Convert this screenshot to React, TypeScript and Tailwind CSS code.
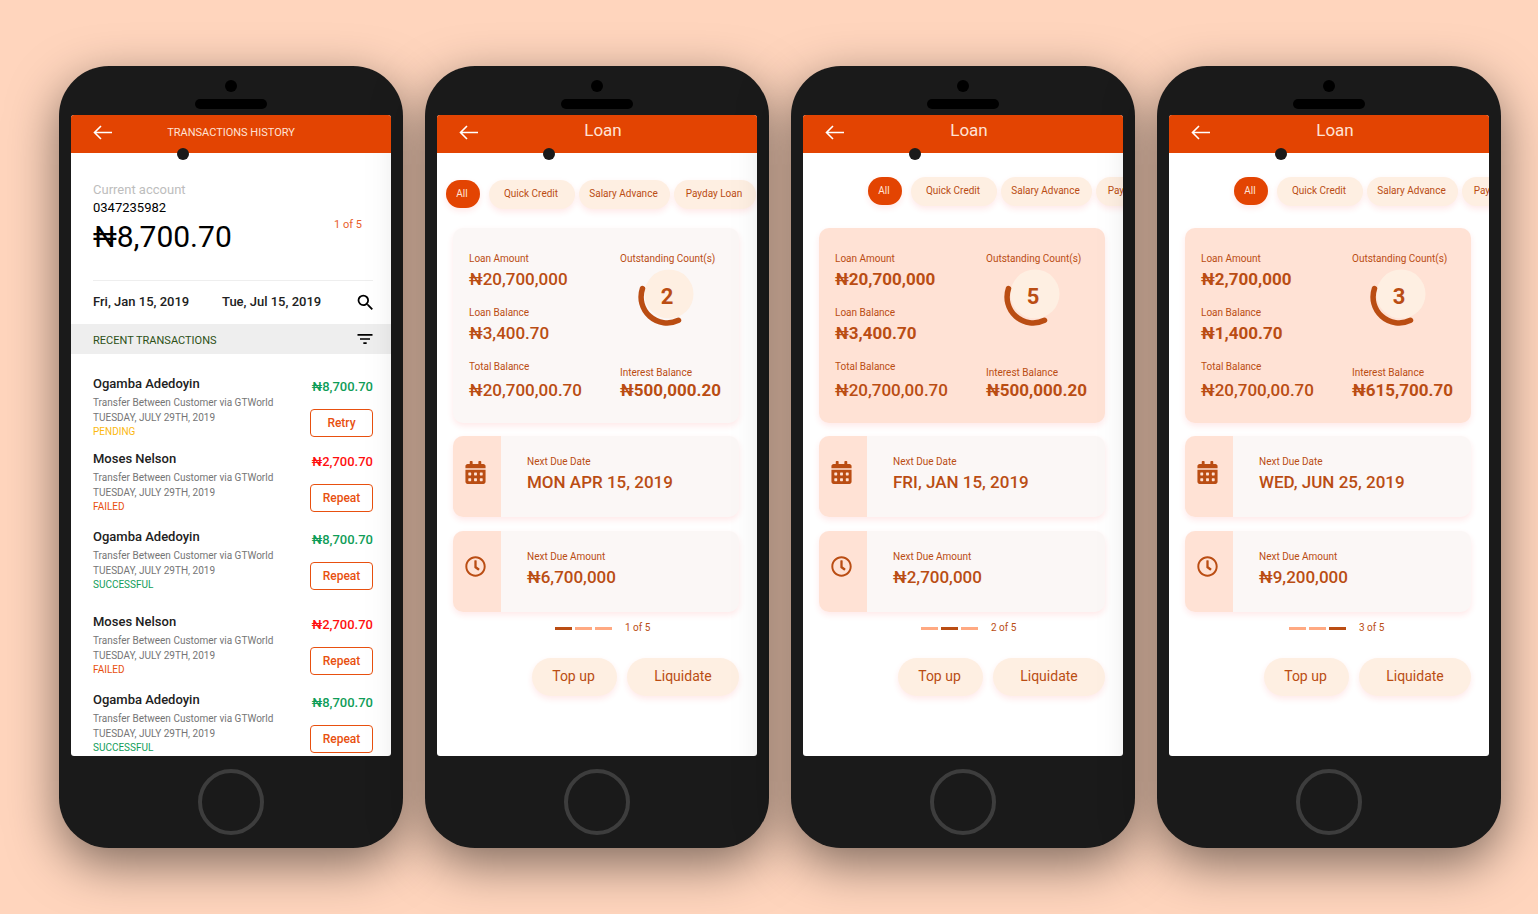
import type { ReactNode } from "react"
import { FaCalendarAlt, FaRegClock } from "react-icons/fa"
import { MdFilterList, MdSearch } from "react-icons/md"

const transactions = [
    { name: "Ogamba Adedoyin", amount: "₦8,700.70", status: "PENDING", action: "Retry", statusColor: "text-[#fbb80f]", amountColor: "text-[#0f9d58]", space: "mb-[3px]" },
    { name: "Moses Nelson", amount: "₦2,700.70", status: "FAILED", action: "Repeat", statusColor: "text-[#e8500f]", amountColor: "text-[#ff0f0f]", space: "mb-[6px]" },
    { name: "Ogamba Adedoyin", amount: "₦8,700.70", status: "SUCCESSFUL", action: "Repeat", statusColor: "text-[#0f9d58]", amountColor: "text-[#0f9d58]", space: "mb-[13px]" },
    { name: "Moses Nelson", amount: "₦2,700.70", status: "FAILED", action: "Repeat", statusColor: "text-[#e8500f]", amountColor: "text-[#ff0f0f]", space: "mb-[6px]" },
    { name: "Ogamba Adedoyin", amount: "₦8,700.70", status: "SUCCESSFUL", action: "Repeat", statusColor: "text-[#0f9d58]", amountColor: "text-[#0f9d58]", space: "" },
]

const loans = [
    {
        amount: "₦20,700,000", balance: "₦3,400.70", total: "₦20,700,00.70", interest: "₦500,000.20",
        count: 2, dueDate: "MON APR 15, 2019", dueAmount: "₦6,700,000", page: 1,
        tabs: "mt-[27px] pl-[9px]", card: "mt-[19px] bg-[#fbf7f6]", weight: "font-medium", pager: "pl-[102px]",
    },
    {
        amount: "₦20,700,000", balance: "₦3,400.70", total: "₦20,700,00.70", interest: "₦500,000.20",
        count: 5, dueDate: "FRI, JAN 15, 2019", dueAmount: "₦2,700,000", page: 2,
        tabs: "mt-6 pl-[65px]", card: "mt-[22px] bg-[#ffe2d5]", weight: "font-bold", pager: "pl-[102px]",
    },
    {
        amount: "₦2,700,000", balance: "₦1,400.70", total: "₦20,700,00.70", interest: "₦615,700.70",
        count: 3, dueDate: "WED, JUN 25, 2019", dueAmount: "₦9,200,000", page: 3,
        tabs: "mt-6 pl-[65px]", card: "mt-[22px] bg-[#ffe2d5]", weight: "font-bold", pager: "pl-[104px]",
    },
]

type Loan = (typeof loans)[number]

function Phone({ children }: { children: ReactNode }) {
    return (
        <section className="flex min-w-[344px] flex-col items-center rounded-[50px] bg-[#1a1a1a] px-3 pt-[14px] pb-[13px] shadow-[0_16px_50px_rgba(0,0,0,0.5)]">
            <div className="size-3 rounded-full bg-black" />
            <div className="mt-[7px] h-[10px] w-[72px] rounded-full bg-black" />
            <div className="mt-[6px] h-[641px] w-full overflow-hidden rounded-[3px] bg-white">{children}</div>
            <button type="button" aria-label="Home" className="mt-[13px] size-[66px] rounded-full border-4 border-[#3d3d3d]" />
        </section>
    )
}

function Header({ children }: { children: ReactNode }) {
    return (
        <header className="relative flex h-[38px] bg-[#e34402] text-[#ffe2d5]">
            <button type="button" aria-label="Back" className="absolute top-[10px] left-[22px]">
                <svg width="20" height="15" viewBox="0 0 20 15" fill="none" stroke="#fff" strokeWidth="1.6">
                    <path d="M19 7.500H1.500M8 1L1.500 7.500L8 14" />
                </svg>
            </button>
            {children}
            <span className="absolute top-[33px] left-[106px] size-3 rounded-full bg-[#1a1a1a]" />
        </header>
    )
}

function HistoryScreen() {
    return (
        <Phone>
            <Header>
                <h1 className="w-full text-center text-[11px] leading-9">TRANSACTIONS HISTORY</h1>
            </Header>
            <div className="pr-[18px] pl-[22px]">
                <div className="flex h-32 items-start justify-between border-b border-[#eeeeee] pt-[29px]">
                    <div>
                        <p className="text-[13px] leading-4 text-[#bdbdbd]">Current account</p>
                        <p className="mt-[2px] text-[13px] leading-4 text-black">0347235982</p>
                        <p className="mt-[3px] text-[30px] leading-9 text-black">₦8,700.70</p>
                    </div>
                    <p className="mt-[35px] mr-[11px] text-[11px] leading-4 text-[#e8602c]">1 of 5</p>
                </div>
                <div className="flex h-[43px] items-center text-[13px] leading-4 font-medium text-[#212121]">
                    <span className="mb-[2px] w-[129px]">Fri, Jan 15, 2019</span>
                    <span className="mb-[2px]">Tue, Jul 15, 2019</span>
                    <button type="button" aria-label="Search" className="-mr-[3px] ml-auto text-black">
                        <MdSearch size={21} />
                    </button>
                </div>
            </div>
            <div className="flex h-[30px] items-center justify-between bg-[#eeeeee] pr-4 pl-[22px]">
                <h2 className="mt-1 text-[11px] leading-4 text-[#2d5016]">RECENT TRANSACTIONS</h2>
                <button type="button" aria-label="Filter" className="text-black">
                    <MdFilterList size={20} />
                </button>
            </div>
            <ul className="pt-[22px] pr-[18px] pl-[22px]">
                {transactions.map((item, i) => (
                    <li key={i} className={`flex h-[72px] justify-between ${item.space}`}>
                        <div className="text-[10px] leading-[15px] text-[#757575]">
                            <h3 className="text-[13px] leading-4 font-medium text-[#212121]">{item.name}</h3>
                            <p className="mt-[3px]">Transfer Between Customer via GTWorld</p>
                            <p>TUESDAY, JULY 29TH, 2019</p>
                            <p className={`leading-[14px] ${item.statusColor}`}>{item.status}</p>
                        </div>
                        <div className="flex flex-col items-end">
                            <p className={`mt-[3px] text-[13px] leading-4 font-medium ${item.amountColor}`}>{item.amount}</p>
                            <button type="button" className="mt-[14px] h-7 w-[63px] rounded-[4px] border border-[#e8500f] text-xs font-medium text-[#e8500f]">
                                {item.action}
                            </button>
                        </div>
                    </li>
                ))}
            </ul>
        </Phone>
    )
}

function CountRing({ count }: { count: number }) {
    return (
        <div className="relative mt-[3px] ml-[18px] flex size-[58px] items-center justify-center">
            <svg className="absolute inset-0" width="58" height="58" viewBox="0 0 58 58" fill="none">
                <circle cx="31" cy="26" r="24.500" fill="#feefe2" />
                <path d="M4.500 20.500A26 26 0 0 0 40.500 52.300" stroke="#ba4d13" strokeWidth="5.500" strokeLinecap="round" />
            </svg>
            <span className="relative text-[22px] leading-6 font-bold">{count}</span>
        </div>
    )
}

function DueCard({ icon, label, value }: { icon: ReactNode; label: string; value: string }) {
    return (
        <div className="flex h-[81px] overflow-hidden rounded-[10px] bg-[#fbf7f6] shadow-[0_3px_6px_rgba(255,40,40,0.1)]">
            <div className="flex w-12 justify-center bg-[#ffe2d5] pt-[25px] pr-[3px]">{icon}</div>
            <div className="pt-[19px] pl-[26px]">
                <p className="text-[10px] leading-[14px]">{label}</p>
                <p className="mt-[3px] text-[17px] leading-5 font-medium">{value}</p>
            </div>
        </div>
    )
}

function LoanScreen({ loan }: { loan: Loan }) {
    const chip = "h-[29px] shrink-0 rounded-full bg-[#feefe2] pr-[2px] pb-[2px] shadow-[0_3px_6px_rgba(255,40,40,0.1)]"

    return (
        <Phone>
            <Header>
                <h1 className="w-full pl-3 text-center text-[17px] leading-[31px]">Loan</h1>
            </Header>
            <nav className={`flex text-[10px] leading-[14px] text-[#ba4d13] ${loan.tabs}`}>
                <button type="button" className="mr-[9px] h-7 w-[34px] shrink-0 rounded-full bg-[#e34402] pr-[2px] text-[#ffe2d5] shadow-[0_3px_6px_rgba(255,40,40,0.1)]">All</button>
                <button type="button" className={`mr-1 w-[86px] ${chip}`}>Quick Credit</button>
                <button type="button" className={`mr-1 w-[91px] ${chip}`}>Salary Advance</button>
                <button type="button" className={`w-[82px] ${chip}`}>Payday Loan</button>
            </nav>
            <main className="pr-[18px] pl-4 text-[#ba4d13]">
                <div className={`flex rounded-[10px] px-4 pt-6 pb-[23px] text-[10px] leading-[14px] shadow-[0_3px_6px_rgba(255,40,40,0.1)] ${loan.card}`}>
                    <div className="w-[151px]">
                        <p>Loan Amount</p>
                        <p className={`mt-[3px] text-[17px] leading-5 ${loan.weight}`}>{loan.amount}</p>
                        <p className="mt-[17px]">Loan Balance</p>
                        <p className={`mt-[3px] text-[17px] leading-5 ${loan.weight}`}>{loan.balance}</p>
                        <p className="mt-[17px]">Total Balance</p>
                        <p className="mt-[6px] text-[17px] leading-5 font-medium">{loan.total}</p>
                    </div>
                    <div>
                        <p>Outstanding Count(s)</p>
                        <div className="-mt-px">
                            <CountRing count={loan.count} />
                        </div>
                        <p className="mt-10">Interest Balance</p>
                        <p className="text-[17px] leading-5 font-bold">{loan.interest}</p>
                    </div>
                </div>
                <div className="mt-[13px] flex flex-col gap-[14px]">
                    <DueCard icon={<FaCalendarAlt size={23} />} label="Next Due Date" value={loan.dueDate} />
                    <DueCard icon={<FaRegClock size={21} />} label="Next Due Amount" value={loan.dueAmount} />
                </div>
                <div className={`mt-2 flex items-center gap-[3px] text-[10px] leading-4 ${loan.pager}`}>
                    {[1, 2, 3].map((page) => (
                        <span key={page} className={`h-[3px] w-[17px] ${page === loan.page ? "bg-[#ba4d13]" : "bg-[#ffa982]"}`} />
                    ))}
                    <span className="pl-[10px]">{loan.page} of 5</span>
                </div>
                <div className="mt-[22px] flex justify-end gap-[10px] text-sm leading-5">
                    <button type="button" className="h-[38px] w-[85px] rounded-full bg-[#feefe2] pr-[2px] pb-[2px] shadow-[0_3px_6px_rgba(255,40,40,0.1)]">Top up</button>
                    <button type="button" className="h-[38px] w-28 rounded-full bg-[#feefe2] pb-[2px] shadow-[0_3px_6px_rgba(255,40,40,0.1)]">Liquidate</button>
                </div>
            </main>
        </Phone>
    )
}

export default function App() {
    return (
        <div className="grid min-h-screen grid-cols-4 items-start gap-[22px] bg-[#ffd5bd] pt-[66px] pr-[37px] pb-[66px] pl-[59px] font-['Roboto',sans-serif]">
            <HistoryScreen />
            {loans.map((loan) => (
                <LoanScreen key={loan.page} loan={loan} />
            ))}
        </div>
    )
}
